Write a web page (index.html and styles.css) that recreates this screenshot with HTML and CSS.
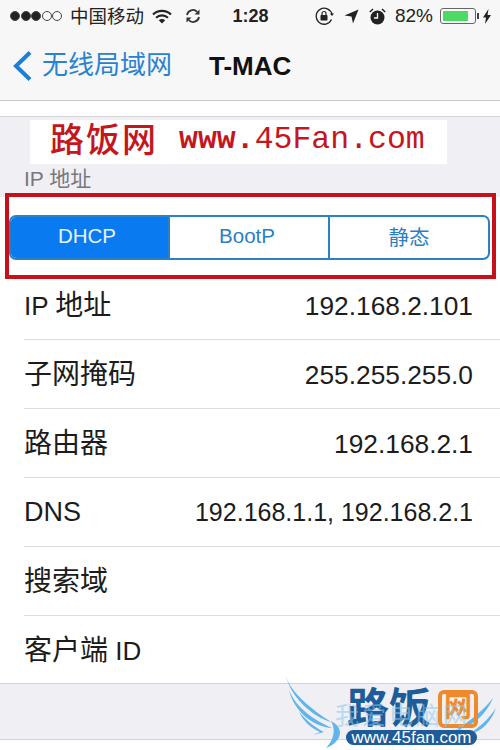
FILE: index.html
```html
<!DOCTYPE html>
<html lang="zh-CN">
<head>
    <meta charset="UTF-8">
    <meta name="viewport" content="width=device-width, initial-scale=1.0">
    <title>T-MAC</title>
    <link rel="stylesheet" href="styles.css">
</head>
<body>
    <div class="phone">
        <div class="bar">
            <div class="status">
                <div class="status-left">
                    <span class="signal"><i class="on"></i><i class="on"></i><i class="on"></i><i></i><i></i></span>
                    <span class="carrier">中国移动</span>
                    <svg class="wifi" width="20" height="15" viewBox="0 0 20 15"><path d="M1 5.500a13 13 0 0 1 18 0" fill="none" stroke="#222" stroke-width="2.200"/><path d="M4 8.700a9 9 0 0 1 12 0" fill="none" stroke="#222" stroke-width="2.200"/><path d="M10 14.500 6.800 11.300a5 5 0 0 1 6.400 0z" fill="#222"/></svg>
                    <svg class="sync" width="16" height="16" viewBox="0 0 16 16"><path d="M2 7a6 6 0 0 1 10.200-3.200M14 9a6 6 0 0 1-10.200 3.200" fill="none" stroke="#333" stroke-width="1.800"/><path d="M14.500 1.500v5h-5zM1.500 14.500v-5h5z" fill="#333"/></svg>
                </div>
                <span class="time">1:28</span>
                <div class="status-right">
                    <svg width="20" height="18" viewBox="0 0 20 18"><path d="M16.500 12.500a8 8 0 1 1 .5-5" fill="none" stroke="#222" stroke-width="1.300"/><path d="M15 6.500h4l-2 2.500z" fill="#222"/><rect x="5.500" y="8" width="7" height="5.500" rx=".8" fill="#222"/><path d="M7 8V6.500a2 2 0 0 1 4 0V8" fill="none" stroke="#222" stroke-width="1.200"/></svg>
                    <svg class="arrow" width="15" height="15" viewBox="0 0 15 15"><path d="M14.500 .5 9 14.500 7.500 7.500 .5 6.500z" fill="#222"/></svg>
                    <svg class="alarm" width="17" height="17" viewBox="0 0 17 17"><circle cx="8.500" cy="9.500" r="7" fill="#222"/><path d="M8.500 5v5H5" fill="none" stroke="#f7f7f8" stroke-width="1.300"/><path d="M.8 4 4 1M16.200 4 13 1" stroke="#222" stroke-width="1.500"/></svg>
                    <span class="percent">82%</span>
                    <span class="battery"><span class="battery-fill"></span></span>
                    <span class="battery-tip"></span>
                    <svg width="8" height="15" viewBox="0 0 8 15"><path d="M5.500 0 0 8.500h3L2 15l6-9H4.500z" fill="#222"/></svg>
                </div>
            </div>
            <div class="nav">
                <svg class="back" width="21" height="32" viewBox="0 0 21 32"><path d="M18 2.500 4 16l14 13.500" fill="none" stroke="#1c7ed6" stroke-width="4"/></svg>
                <span class="back-text">无线局域网</span>
                <span class="title">T-MAC</span>
            </div>
        </div>

        <div class="strip"></div>
        <div class="section-head">IP 地址</div>

        <div class="seg-cell">
            <div class="seg">
                <div class="seg-item active">DHCP</div>
                <div class="seg-item boot">BootP</div>
                <div class="seg-item">静态</div>
            </div>
        </div>

        <div class="list">
            <div class="row"><span class="label">IP <span class="cn">地址</span></span><span class="value">192.168.2.101</span></div>
            <div class="row"><span class="label cn">子网掩码</span><span class="value">255.255.255.0</span></div>
            <div class="row"><span class="label cn">路由器</span><span class="value">192.168.2.1</span></div>
            <div class="row"><span class="dns-label">DNS</span><span class="value dns">192.168.1.1, 192.168.2.1</span></div>
            <div class="row"><span class="label cn">搜索域</span></div>
            <div class="row"><span class="label"><span class="cn">客户端</span> ID</span></div>
        </div>
        <div class="foot"></div>

        <!-- stamped over the screenshot -->
        <div class="banner"><span class="banner-cn">路饭网</span><span class="banner-url"><b>www.</b>45Fan.com</span></div>
        <div class="redbox"></div>
        <div class="logo">
            <svg class="wings" width="216" height="80" viewBox="0 0 216 80">
                <g fill="#62b4ec">
                    <path d="M1 4C6 22 26 38 47 52 30 47 8 30 1 4z"/>
                    <path d="M5 20C12 38 30 50 48 58 30 57 10 42 5 20z"/>
                    <path d="M15 42C24 52 32 58 40 62L29 65 36 62C26 58 19 50 15 42z"/>
                    <path d="M47 51C61 58 58 72 42 78 50 69 52 60 47 51z"/>
                    <path d="M209 28C196 44 184 52 172 60 186 57 201 47 209 28z"/>
                    <path d="M212 38C204 50 196 56 186 64 198 61 207 52 212 38z"/>
                    <path d="M178 58C168 62 168 70 176 72 172 67 173 62 178 58z"/>
                </g>
            </svg>
            <span class="logo-cn">路饭</span>
            <span class="logo-box">网</span>
            <span class="logo-pill">www.45fan.com</span>
            <span class="faint">我爱电脑网</span>
        </div>
    </div>
</body>
</html>
```

FILE: styles.css
```css
* {
    box-sizing: border-box;
}
body {
    margin: 0;
    background: #fff;
    font-family: "Liberation Sans", "Noto Sans CJK SC", sans-serif;
}
.phone {
    position: relative;
    width: 500px;
    height: 750px;
    overflow: hidden;
    color: #111;
}
.bar {
    height: 101px;
    background: #f7f7f8;
    border-bottom: 1px solid #c8c8cb;
}
.status {
    display: grid;
    grid-template-columns: 1fr auto 1fr;
    align-items: center;
    height: 32px;
    padding: 0 9px 0 10px;
}
.status-left,
.status-right {
    display: flex;
    align-items: center;
}
.status-right {
    justify-content: flex-end;
}
.signal {
    display: flex;
    gap: .5px;
}
.signal i {
    width: 10px;
    height: 10px;
    border: 1px solid #444;
    border-radius: 50%;
}
.signal i.on {
    background: #222;
}
.carrier {
    margin-left: 8px;
    padding-bottom: 2px;
    font-size: 18.500px;
    color: #222;
}
.wifi {
    margin-left: 8px;
}
.sync {
    margin-left: 13px;
}
.time {
    font-size: 18px;
    font-weight: bold;
    color: #222;
}
.arrow {
    margin-left: 9px;
}
.alarm {
    margin-left: 10px;
}
.percent {
    margin-left: 9px;
    font-size: 19px;
    color: #222;
}
.battery {
    display: block;
    width: 36px;
    height: 16px;
    margin-left: 7px;
    padding: 2px;
    border: 1px solid #666;
    border-radius: 3px;
}
.battery-fill {
    display: block;
    width: 82%;
    height: 100%;
    background: #4cd964;
}
.battery-tip {
    width: 2px;
    height: 6px;
    margin: 0 4px 0 1px;
    background: #444;
}
.nav {
    display: flex;
    align-items: center;
    height: 68px;
    padding: 0 0 2px 12px;
}
.back {
    margin-top: 2px;
}
.back-text {
    margin-left: 9px;
    padding-bottom: 5px;
    font-size: 26px;
    color: #2a82cf;
}
.title {
    margin-left: 37px;
    padding-top: 2px;
    font-size: 26px;
    font-weight: bold;
    color: #111;
}
.strip {
    height: 16px;
    background: #fff;
    border-bottom: 1px solid #d6d6da;
}
.section-head {
    height: 80px;
    padding: 49px 0 0 24px;
    background: #efeff4;
    font-size: 21px;
    line-height: 26px;
    color: #77777c;
}
.seg-cell {
    height: 74px;
    padding: 18px 10px 0 9px;
    background: #fff;
}
.seg {
    display: grid;
    grid-template-columns: 157px 160px 1fr;
    height: 45px;
    border: 2px solid #2a82c4;
    border-radius: 7px;
    overflow: hidden;
}
.seg-item {
    display: flex;
    align-items: center;
    justify-content: center;
    padding-bottom: 4px;
    border-left: 2px solid #2a82c4;
    font-size: 20.500px;
    color: #2a7fc4;
}
.seg-item.active {
    padding-right: 5px;
    border-left: none;
    background: #0a7af0;
    color: #e6f3ff;
}
.seg-item.boot {
    padding-right: 4px;
}
.list {
    padding-left: 24px;
    background: #fff;
}
.row {
    display: flex;
    align-items: center;
    justify-content: space-between;
    height: 69px;
    padding-right: 27px;
    border-bottom: 1px solid #dcdcdf;
    font-size: 26px;
    line-height: 40px;
    color: #1c1c1c;
}
.row:last-child {
    height: 68px;
    margin-left: -24px;
    padding-left: 24px;
    border-bottom-color: #d2d2d6;
}
.label {
    padding-top: 2px;
}
.cn {
    font-size: 28px;
}
.dns-label {
    font-size: 27px;
}
.value {
    padding-top: 2px;
    font-size: 26.300px;
}
.dns {
    padding-top: 0;
    font-size: 25px;
}
.foot {
    height: 56px;
    background: #efeff4;
    border-bottom: 1px solid #d2d2d6;
}
.banner {
    position: absolute;
    left: 30px;
    top: 120px;
    display: flex;
    align-items: center;
    width: 417px;
    height: 44px;
    padding-left: 20px;
    background: #fff;
    color: #c4161c;
}
.banner-cn {
    padding-bottom: 9px;
    font-size: 34px;
    font-weight: 500;
    letter-spacing: 2px;
}
.banner-url {
    margin-left: 21px;
    padding-bottom: 6px;
    font-family: "Liberation Mono", monospace;
    font-size: 31.500px;
}
.redbox {
    position: absolute;
    left: 5px;
    top: 193px;
    width: 491px;
    height: 86px;
    border: 4px solid #c8101a;
}
.logo {
    position: absolute;
    left: 284px;
    top: 670px;
    width: 216px;
    height: 80px;
}
.wings {
    position: absolute;
    left: 0;
    top: 0;
}
.logo-cn {
    position: absolute;
    left: 63px;
    top: 14px;
    font-size: 42px;
    line-height: 50px;
    font-weight: bold;
    color: #1d5c98;
}
.logo-box {
    position: absolute;
    left: 154px;
    top: 20px;
    width: 40px;
    height: 38px;
    border: 4px solid #ee8a2c;
    border-radius: 6px;
    font-size: 28px;
    line-height: 28px;
    font-weight: bold;
    text-align: center;
    color: #ee8a2c;
}
.logo-pill {
    position: absolute;
    left: 62px;
    top: 60px;
    width: 131px;
    height: 15px;
    border-radius: 8px;
    background: #1d5c98;
    font-size: 17px;
    line-height: 15px;
    text-align: center;
    color: #fff;
}
.faint {
    position: absolute;
    left: 51px;
    top: 32px;
    font-size: 24px;
    line-height: 28px;
    letter-spacing: 3px;
    color: #8cc8f0;
    opacity: .55;
}
```
